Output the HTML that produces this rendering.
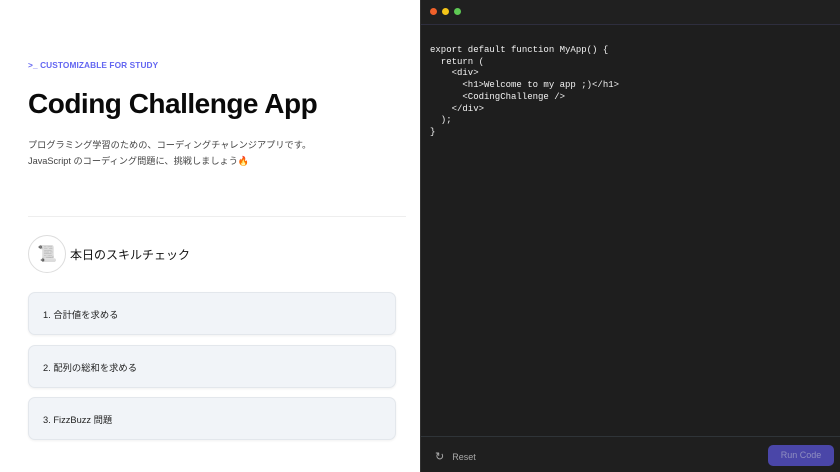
<!DOCTYPE html>
<html><head><meta charset="utf-8"><style>
*{margin:0;padding:0;box-sizing:border-box}
body{width:840px;height:472px;overflow:hidden;background:#fff;font-family:"Liberation Sans","Noto Sans CJK JP",sans-serif;position:relative}
.left{position:absolute;left:0;top:0;width:420px;height:472px;background:#fff}
.tag{position:absolute;left:28px;top:60px;font-size:8.3px;font-weight:bold;color:#6366f1;letter-spacing:0.1px}
h1{position:absolute;left:28px;top:88px;font-size:28px;font-weight:bold;color:#0a0a0a;letter-spacing:-0.5px}
.desc{position:absolute;left:28px;top:137px;font-size:9.2px;color:#444;line-height:16px}
.hr{position:absolute;left:28px;top:216px;width:378px;height:1px;background:#eee}
.circ{position:absolute;left:28px;top:235px;width:38px;height:38px;border-radius:50%;border:1px solid #ddd;display:flex;align-items:center;justify-content:center;font-size:16px;filter:grayscale(1)}
.st{position:absolute;left:70px;top:246px;font-size:12px;color:#111}
.card{position:absolute;left:28px;width:368px;height:43px;background:#f1f4f8;border:1px solid #e3e7ec;border-radius:7px;box-shadow:0 1px 2px rgba(0,0,0,.06);font-size:9.3px;color:#222;padding:14px 0 0 14px}
.right{position:absolute;left:420px;top:0;width:420px;height:472px;background:#1e1e1e;border-left:1px solid #333}
.top{height:25px;border-bottom:1px solid #2e2e3e;background:#202020}
.dot{position:absolute;top:8px;width:7px;height:7px;border-radius:50%}
pre{position:absolute;left:9px;top:45px;font-family:"Liberation Mono",monospace;font-size:9px;line-height:11.7px;color:#f2f2f2}
.bot{position:absolute;left:0;top:436px;width:420px;height:36px;border-top:1px solid #2f3438;background:#1f1f1f}
.reset{position:absolute;left:14px;top:13px;font-size:9px;color:#aaa}
.run{position:absolute;left:347px;top:8px;width:66px;height:21px;border-radius:5px;background:#4a46a8;color:#8f8ec0;font-size:9px;text-align:center;line-height:21px}
</style></head><body>
<div class="left">
<div class="tag">&gt;_ CUSTOMIZABLE FOR STUDY</div>
<h1>Coding Challenge App</h1>
<div class="desc">プログラミング学習のための、コーディングチャレンジアプリです。<br>JavaScript のコーディング問題に、挑戦しましょう🔥</div>
<div class="hr"></div>
<div class="circ">📜</div>
<div class="st">本日のスキルチェック</div>
<div class="card" style="top:292px">1. 合計値を求める</div>
<div class="card" style="top:345px">2. 配列の総和を求める</div>
<div class="card" style="top:397px">3. FizzBuzz 問題</div>
</div>
<div class="right">
<div class="top"></div>
<div class="dot" style="left:9px;background:#f0602a"></div>
<div class="dot" style="left:21px;background:#f5c518"></div>
<div class="dot" style="left:33px;background:#5ec954"></div>
<pre>export default function MyApp() {
  return (
    &lt;div&gt;
      &lt;h1&gt;Welcome to my app ;)&lt;/h1&gt;
      &lt;CodingChallenge /&gt;
    &lt;/div&gt;
  );
}</pre>
<div class="bot">
<div class="reset"><span style="font-size:11px;margin-right:8px">↻</span>Reset</div>
<div class="run">Run Code</div>
</div>
</div>
</body></html>
